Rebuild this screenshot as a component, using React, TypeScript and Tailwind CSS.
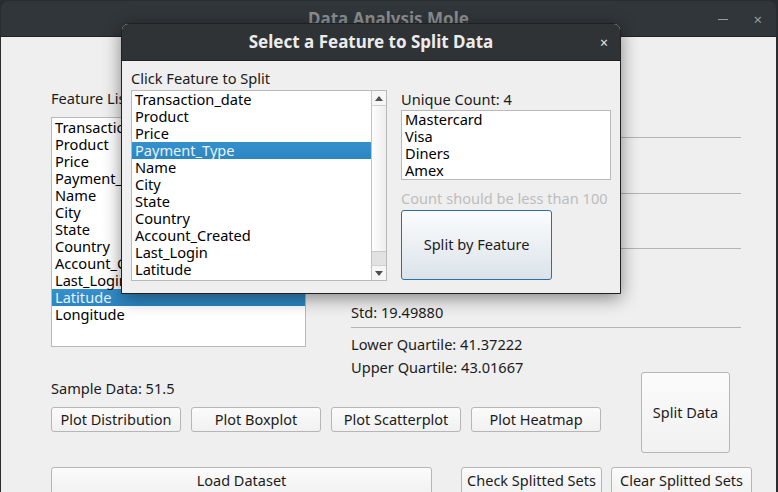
import React from "react";

const font = { fontFamily: '"Noto Sans", "DejaVu Sans", sans-serif' };

function Btn({ label, className }: { label: string; className: string }) {
  return (
    <div
      className={
        "flex shrink-0 items-center justify-center rounded-[3px] border border-[#b6b6b6] bg-gradient-to-b from-[#fbfbfb] to-[#f1f1f1] text-[14.5px] text-[#1c1c1c] " +
        className
      }
    >
      {label}
    </div>
  );
}

const mainItems = [
  "Transaction_date",
  "Product",
  "Price",
  "Payment_Type",
  "Name",
  "City",
  "State",
  "Country",
  "Account_Created",
  "Last_Login",
  "Latitude",
  "Longitude",
];

function Row({ text, selected }: { text: string; selected?: boolean }) {
  return (
    <div
      className={
        "h-[17px] shrink-0 whitespace-nowrap pl-[3px] leading-[17px] " +
        (selected ? "bg-gradient-to-b from-[#3590cc] to-[#2b86c2] text-[#e9f1f9]" : "text-black")
      }
    >
      {text}
    </div>
  );
}

function Line() {
  return <div className="h-px w-full shrink-0 bg-[#b4b4b4]" />;
}

export default function App() {
  return (
    <div className="relative h-[492px] w-[778px] overflow-hidden bg-[#2a2d30] text-[14.6px]" style={font}>
      {/* main window */}
      <div className="ml-[1px] mr-[2px] mt-px flex h-[491px] flex-col overflow-hidden rounded-t-[8px] bg-[#31363a]">
        <div className="relative flex h-[36px] shrink-0 items-center justify-center border-b border-[#1f2224]">
          <span className="text-[17px] font-bold text-[#8b8e91]">Data Analysis Mole</span>
          <div className="absolute right-[48px] top-[18px] h-px w-[10px] bg-[#9a9c9e]" />
          <span className="absolute right-[14px] top-[7px] text-[15px] text-[#9a9c9e]">×</span>
        </div>
        <div className="flex flex-1 flex-col bg-[#efefef] pl-[50px]">
          {/* top area */}
          <div className="flex h-[335px] shrink-0">
            <div className="flex w-[255px] flex-col">
              <div className="mt-[53px] h-[17px] shrink-0 leading-[17px] text-[#1c1c1c]">Feature List</div>
              <div className="mt-[10px] h-[230px] shrink-0 border border-[#b9b9b9] bg-white pt-px">
                {mainItems.map((t) => (
                  <Row key={t} text={t} selected={t === "Latitude"} />
                ))}
              </div>
            </div>
            <div className="ml-[45px] flex w-[390px] flex-col text-[#1c1c1c]">
              <div className="h-[100px] shrink-0" />
              <Line />
              <div className="h-[55px] shrink-0" />
              <Line />
              <div className="h-[54px] shrink-0" />
              <Line />
              <div className="mt-[55px] h-[17px] shrink-0 leading-[17px]">Std: 19.49880</div>
              <div className="mt-[6px] shrink-0">
                <Line />
              </div>
              <div className="mt-[8px] h-[17px] shrink-0 leading-[17px]">Lower Quartile: 41.37222</div>
              <div className="mt-[6px] h-[17px] shrink-0 leading-[17px]">Upper Quartile: 43.01667</div>
            </div>
          </div>
          {/* middle row */}
          <div className="flex h-[80px] shrink-0">
            <div className="flex w-[550px] flex-col">
              <div className="mt-[8px] h-[17px] shrink-0 leading-[17px] text-[#1c1c1c]">Sample Data: 51.5</div>
              <div className="mt-[10px] flex gap-[10px]">
                <Btn label="Plot Distribution" className="h-[25px] w-[130px]" />
                <Btn label="Plot Boxplot" className="h-[25px] w-[130px]" />
                <Btn label="Plot Scatterplot" className="h-[25px] w-[130px]" />
                <Btn label="Plot Heatmap" className="h-[25px] w-[130px]" />
              </div>
            </div>
            <Btn label="Split Data" className="ml-[40px] h-[81px] w-[89px]" />
          </div>
          {/* bottom row */}
          <div className="mt-[15px] flex">
            <Btn label="Load Dataset" className="h-[28px] w-[381px]" />
            <Btn label="Check Splitted Sets" className="ml-[29px] h-[28px] w-[141px]" />
            <Btn label="Clear Splitted Sets" className="ml-[9px] h-[28px] w-[141px]" />
          </div>
        </div>
      </div>

      {/* dialog */}
      <div className="absolute left-[121px] top-[23px] flex h-[271px] w-[500px] flex-col overflow-hidden rounded-t-[7px] border border-[#1e2022] bg-[#efefef] shadow-[0_4px_18px_rgba(0,0,0,0.45)]">
        <div className="relative flex h-[36px] shrink-0 items-center justify-center bg-[#2f3336]">
          <span className="text-[17px] font-bold text-[#ececec]">Select a Feature to Split Data</span>
          <span className="absolute right-[12px] top-[8px] text-[14px] text-[#e6e6e6]">×</span>
        </div>
        <div className="flex flex-1 border-t border-[#1e2022] pl-[9px]">
          <div className="flex w-[256px] flex-col">
            <div className="mt-[9px] h-[17px] shrink-0 leading-[17px] text-[#1c1c1c]">Click Feature to Split</div>
            <div className="mt-[3px] flex h-[191px] shrink-0 overflow-hidden border border-[#b9b9b9] bg-white">
              <div className="flex-1 overflow-hidden">
                {mainItems.map((t) => (
                  <Row key={t} text={t} selected={t === "Payment_Type"} />
                ))}
              </div>
              <div className="flex w-[15px] flex-col border-l border-[#c4c4c4]">
                <div className="flex h-[15px] shrink-0 items-center justify-center border-b border-[#d0d0d0] bg-[#f6f6f6]">
                  <svg width="8" height="5" viewBox="0 0 8 5">
                    <polygon points="0,5 8,5 4,0" fill="#505050" />
                  </svg>
                </div>
                <div className="flex-1 bg-gradient-to-r from-[#fdfdfd] to-[#eeeeee]" />
                <div className="h-[14px] shrink-0 border-t border-[#c8c8c8] bg-[#e2e2e2]" />
                <div className="flex h-[15px] shrink-0 items-center justify-center border-t border-[#d0d0d0] bg-[#f6f6f6]">
                  <svg width="8" height="5" viewBox="0 0 8 5">
                    <polygon points="0,0 8,0 4,5" fill="#505050" />
                  </svg>
                </div>
              </div>
            </div>
          </div>
          <div className="ml-[14px] flex w-[210px] flex-col">
            <div className="mt-[30px] h-[17px] shrink-0 leading-[17px] text-[#1c1c1c]">Unique Count: 4</div>
            <div className="mt-[2px] h-[70px] shrink-0 border border-[#b9b9b9] bg-white">
              {["Mastercard", "Visa", "Diners", "Amex"].map((t) => (
                <Row key={t} text={t} />
              ))}
            </div>
            <div className="mt-[10px] h-[17px] shrink-0 whitespace-nowrap leading-[17px] text-[#bdbdbd]">
              Count should be less than 100
            </div>
            <div className="mt-[3px] flex h-[70px] w-[151px] shrink-0 items-center justify-center rounded-[3px] border border-[#2f6ea3] bg-gradient-to-b from-[#fbfcfd] to-[#dbe3ea] text-[#1c1c1c]">
              Split by Feature
            </div>
          </div>
        </div>
      </div>
    </div>
  );
}
